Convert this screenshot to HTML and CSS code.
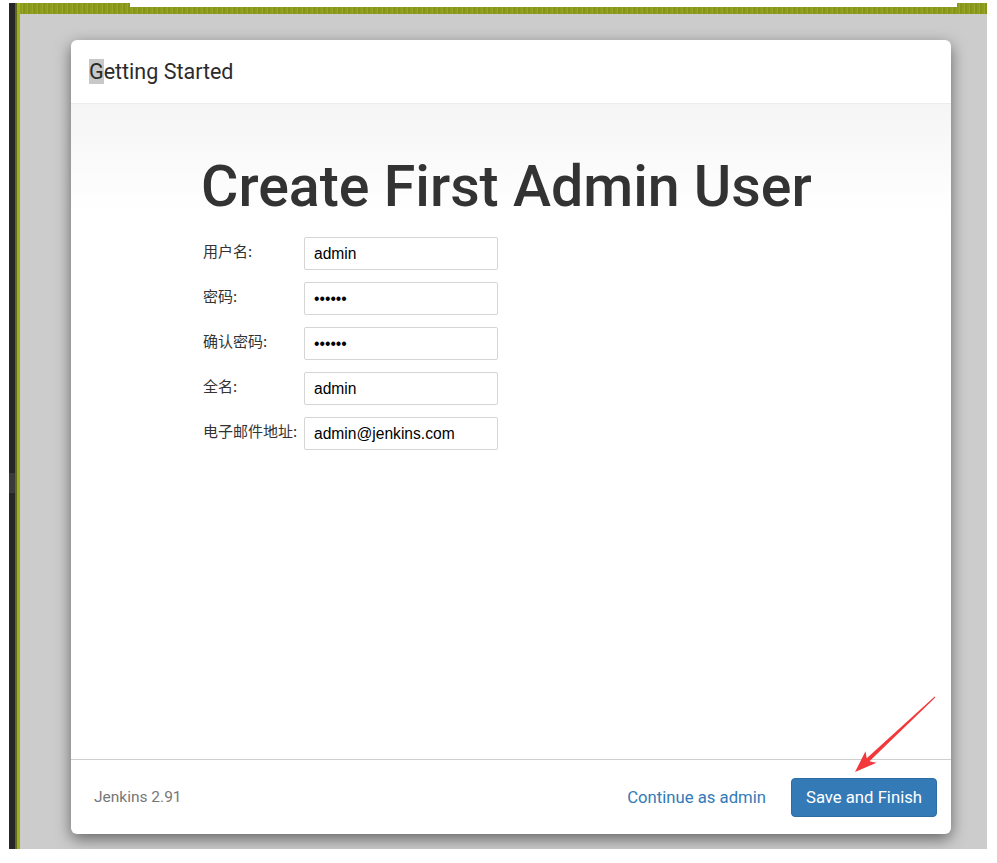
FILE: index.html
```html
<!DOCTYPE html>
<html lang="zh-CN">
<head>
  <meta charset="UTF-8" />
  <meta name="viewport" content="width=device-width, initial-scale=1.0"/>
  <title>Jenkins</title>
  <link rel="stylesheet" href="styles.css">
</head>
<body>

  <div class="desk">
    <div class="rail"><div class="thumb"></div></div>
    <div class="edge"></div>
    <div class="stage">
      <div class="topband">
        <div class="band-left"></div>
        <div class="band-mid"></div>
        <div class="band-right"></div>
      </div>
      <div class="backdrop">

        <div class="modal">
          <div class="modal-header">
            <span class="sel">G</span>etting Started
          </div>

          <div class="modal-body">
            <h1>Create First Admin User</h1>
            <form class="user-form">
              <label for="username">用户名:</label>
              <input type="text" id="username" value="admin" />

              <label for="password1">密码:</label>
              <input type="password" id="password1" value="admin1" />

              <label for="password2">确认密码:</label>
              <input type="password" id="password2" value="admin1" />

              <label for="fullname">全名:</label>
              <input type="text" id="fullname" value="admin" />

              <label for="email">电子邮件地址:</label>
              <input type="text" id="email" value="admin@jenkins.com" />
            </form>
          </div>

          <div class="modal-footer">
            <span class="version">Jenkins 2.91</span>
            <a class="skip" href="#">Continue as admin</a>
            <button class="btn-primary">Save and Finish</button>
          </div>

          <!-- annotation arrow drawn on top of the screenshot -->
          <svg class="arrow" width="90" height="85" viewBox="0 0 90 85">
            <polygon fill="#f2383a" points="5,80 26.5,70.8 19.5,69.2 85.3,5.4 84.7,4.6 16.7,66.2 15.5,59.2" />
          </svg>
        </div>

      </div>
    </div>
  </div>

</body>
</html>
```

FILE: styles.css
```css
body {
  margin: 0;
  background: #fff;
  font-family: Roboto, "Noto Sans", sans-serif;
}

.desk {
  display: flex;
  margin: 3px 0 0 9px;
  width: 978px;
  height: 846px;
}

.rail {
  width: 6px;
  background: #262626;
  display: flex;
  flex-direction: column;
  padding-top: 470px;
  box-sizing: border-box;
}

.thumb {
  height: 20px;
  background: #3a3a3a;
}

.edge {
  width: 5px;
  background: linear-gradient(to right, #5f6a1c 0, #5f6a1c 2px, #9cb022 2px);
}

.stage {
  flex: 1;
  display: flex;
  flex-direction: column;
}

.topband {
  display: flex;
  height: 11px;
}

.band-left, .band-right, .band-mid {
  background: repeating-linear-gradient(90deg, #8e9c1e 0, #8e9c1e 2px, #97a628 2px, #97a628 3px, #86941a 3px, #86941a 5px);
}

.band-left {
  width: 110px;
}

.band-mid {
  width: 827px;
  border-top: 4px solid #fff;
}

.band-right {
  flex: 1;
}

.backdrop {
  flex: 1;
  background: #cccccc;
  padding: 26px 0 0 51px;
}

.modal {
  position: relative;
  width: 880px;
  height: 794px;
  background: #fff;
  border-radius: 6px;
  box-shadow: 0 5px 15px rgba(0, 0, 0, 0.5);
  display: flex;
  flex-direction: column;
}

.modal-header {
  height: 64px;
  box-sizing: border-box;
  padding-left: 18px;
  display: flex;
  align-items: center;
  font-size: 21.5px;
  color: #2b2b2b;
  border-bottom: 1px solid #ececec;
}

.sel {
  background: #c8c8c8;
}

.modal-body {
  flex: 1;
  padding-left: 130px;
  background: linear-gradient(#f5f5f5, #fff 110px);
}

.modal-body h1 {
  margin: 51px 0 19px;
  font-size: 57.3px;
  font-weight: 500;
  line-height: 1.1;
  color: #333;
}

.user-form {
  display: grid;
  grid-template-columns: 101px 194px;
  row-gap: 12px;
  margin-left: 2px;
}

.user-form label {
  font-family: "Noto Sans CJK SC", sans-serif;
  font-size: 15px;
  color: #333;
  padding-top: 3px;
}

.user-form input {
  height: 33px;
  box-sizing: border-box;
  padding: 0 9px;
  border: 1px solid #d5d5d5;
  border-radius: 2px;
  font-family: "Liberation Sans", Arial, sans-serif;
  font-size: 15.6px;
  color: #000;
}

.modal-footer {
  height: 75px;
  box-sizing: border-box;
  border-top: 1px solid #cfcfcf;
  display: flex;
  align-items: center;
  padding: 0 14px 0 23px;
}

.version {
  flex: 1;
  font-size: 15.5px;
  color: #777;
}

.skip {
  font-size: 16.7px;
  color: #337ab7;
  text-decoration: none;
  margin-right: 25px;
}

.btn-primary {
  height: 39px;
  padding: 0 14px;
  border: 1px solid #2e6da4;
  border-radius: 4px;
  background: #337ab7;
  color: #fff;
  font-family: Roboto, sans-serif;
  font-size: 16.7px;
}

.arrow {
  position: absolute;
  left: 779px;
  top: 652px;
}
```
